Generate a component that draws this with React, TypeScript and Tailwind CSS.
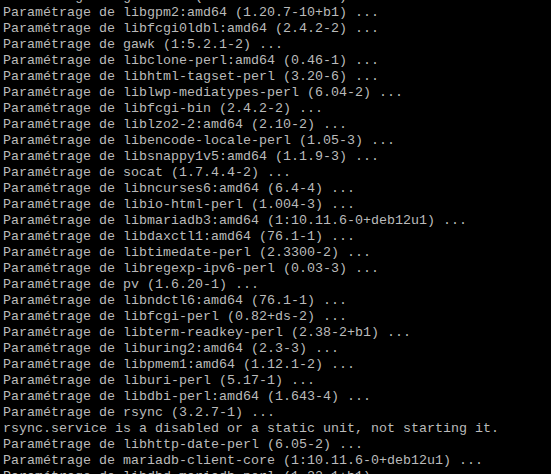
import React from 'react';

const lines: string[] = [
  'Paramétrage de galera-4 (26.4.16-0+deb12u1) ...',
  'Paramétrage de libgpm2:amd64 (1.20.7-10+b1) ...',
  'Paramétrage de libfcgi0ldbl:amd64 (2.4.2-2) ...',
  'Paramétrage de gawk (1:5.2.1-2) ...',
  'Paramétrage de libclone-perl:amd64 (0.46-1) ...',
  'Paramétrage de libhtml-tagset-perl (3.20-6) ...',
  'Paramétrage de liblwp-mediatypes-perl (6.04-2) ...',
  'Paramétrage de libfcgi-bin (2.4.2-2) ...',
  'Paramétrage de liblzo2-2:amd64 (2.10-2) ...',
  'Paramétrage de libencode-locale-perl (1.05-3) ...',
  'Paramétrage de libsnappy1v5:amd64 (1.1.9-3) ...',
  'Paramétrage de socat (1.7.4.4-2) ...',
  'Paramétrage de libncurses6:amd64 (6.4-4) ...',
  'Paramétrage de libio-html-perl (1.004-3) ...',
  'Paramétrage de libmariadb3:amd64 (1:10.11.6-0+deb12u1) ...',
  'Paramétrage de libdaxctl1:amd64 (76.1-1) ...',
  'Paramétrage de libtimedate-perl (2.3300-2) ...',
  'Paramétrage de libregexp-ipv6-perl (0.03-3) ...',
  'Paramétrage de pv (1.6.20-1) ...',
  'Paramétrage de libndctl6:amd64 (76.1-1) ...',
  'Paramétrage de libfcgi-perl (0.82+ds-2) ...',
  'Paramétrage de libterm-readkey-perl (2.38-2+b1) ...',
  'Paramétrage de liburing2:amd64 (2.3-3) ...',
  'Paramétrage de libpmem1:amd64 (1.12.1-2) ...',
  'Paramétrage de liburi-perl (5.17-1) ...',
  'Paramétrage de libdbi-perl:amd64 (1.643-4) ...',
  'Paramétrage de rsync (3.2.7-1) ...',
  'rsync.service is a disabled or a static unit, not starting it.',
  'Paramétrage de libhttp-date-perl (6.05-2) ...',
  'Paramétrage de mariadb-client-core (1:10.11.6-0+deb12u1) ...',
  'Paramétrage de libdbd-mariadb-perl (1.22-1+b1) ...',
];

export default function App() {
  return (
    <div className="w-[551px] h-[474px] overflow-hidden bg-black">
      <div className="flex flex-col -mt-[11px] pl-[3px] font-['Liberation_Mono','Courier_New',monospace] text-[13.333px] leading-[16px] text-[#bbbbbb]">
        {lines.map((line, i) => (
          <div key={i} className="whitespace-pre h-4">
            {line}
          </div>
        ))}
      </div>
    </div>
  );
}
